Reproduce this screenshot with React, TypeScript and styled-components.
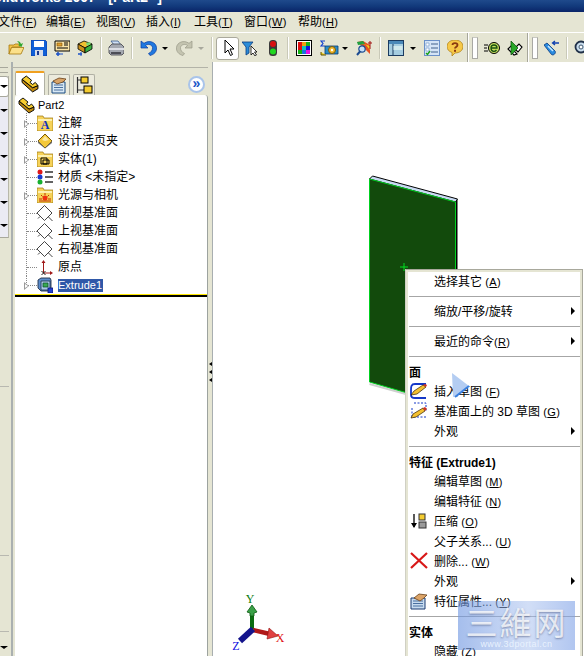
import React from "react";
import styled, { createGlobalStyle } from "styled-components";

const Global = createGlobalStyle`
  html, body { margin: 0; padding: 0; background: #fff; }
  #root { width: 584px; height: 656px; }
`;

const CJK = `"Liberation Sans", "Noto Sans CJK SC", sans-serif`;
const FACE = "#e5e5d3";

const Page = styled.div`
  width: 584px; height: 656px; overflow: hidden; display: flex; flex-direction: column;
  font-family: ${CJK}; font-size: 12px; color: #000; background: ${FACE};
`;
const TitleBar = styled.div`
  height: 12px; flex: none; overflow: hidden; color: #fff; font-weight: bold; font-size: 14px; line-height: 16px;
  background: linear-gradient(#1f4a8c, #123a7c 50%, #0a2468);
  white-space: nowrap;
  span { display: block; margin: -11px 0 0 -16px; font-family: "Liberation Sans", sans-serif; }
`;
const MenuBar = styled.div`
  height: 20px; flex: none; display: flex; align-items: center; background: ${FACE}; white-space: nowrap; overflow: hidden;
`;
const MenuEntry = styled.div<{ $w: number; $first?: boolean }>`
  flex: none; width: ${p => p.$w}px; line-height: 20px; margin-left: ${p => (p.$first ? -2 : 0)}px;
`;
const Key = styled.span`
  font-size: 11px; letter-spacing: .3px;
  font-family: "Liberation Sans", sans-serif;
`;
const Toolbar = styled.div`
  height: 28px; padding-top: 1px; flex: none; display: flex; align-items: center; padding-left: 8px; background: ${FACE};
  border-top: 1px solid #fff; overflow: hidden;
`;
const Tool = styled.div<{ $l: number; $w?: number }>`
  flex: none; margin-left: ${p => p.$l}px; width: ${p => p.$w ?? 16}px; height: 16px; display: flex;
  svg { display: block; width: 100%; height: 100%; }
`;
const Pressed = styled.div<{ $l: number }>`
  flex: none; margin-left: ${p => p.$l}px; width: 23px; height: 23px; box-sizing: border-box; background: #fff;
  border: 1px solid #aaa99c; border-radius: 3px; display: flex; align-items: center; justify-content: center;
`;
const Sep = styled.div<{ $l: number }>`
  flex: none; margin-left: ${p => p.$l}px; width: 2px; height: 22px; background: #fff; border-left: 1px solid #c9c9b8; box-sizing: border-box;
`;
const Divider = styled.div<{ $l: number }>`
  flex: none; margin-left: ${p => p.$l}px; width: 2px; height: 30px; background: #fff; border-left: 1px solid #a6a69a; box-sizing: border-box;
`;
const Grip = styled.div<{ $l: number }>`
  flex: none; margin-left: ${p => p.$l}px; width: 6px; height: 22px; box-sizing: border-box;
  background: #fff; border: 1px solid #a9a9a4; border-top-color: #c8c8c2;
`;
const Drop = styled.div<{ $l: number; $off?: boolean }>`
  flex: none; margin-left: ${p => p.$l}px; width: 0; height: 0;
  border-left: 3px solid transparent; border-right: 3px solid transparent;
  border-top: 3px solid ${p => (p.$off ? "#a8a89c" : "#000")};
`;
const Main = styled.div`
  flex: 1; min-height: 0; display: flex; background: ${FACE};
`;
const Strip = styled.div`
  flex: none; width: 11px; box-sizing: border-box; display: flex; flex-direction: column;
  background: ${FACE};
`;
const StripGrip = styled.div`
  height: 14px; flex: none; box-sizing: border-box; padding-top: 5px;
  &::before { content: ""; display: block; width: 8px; height: 4px; border-top: 1px solid #a8a89c; border-bottom: 1px solid #a8a89c; }
`;
const ComboStack = styled.div`
  flex: none; height: 162px; width: 9px; box-sizing: border-box; background: #ebebf3;
  border-bottom: 1px solid #a8a89c; border-right: 1px solid #b8b8aa; display: flex; flex-direction: column;
`;
const ComboHead = styled.div`
  height: 21px; flex: none; margin-bottom: 2px; margin-right: -1px; box-sizing: border-box; display: flex; align-items: center;
  background: #fff; border: 1px solid #a8a89c; border-left: 0; border-radius: 0 3px 3px 0;
`;
const ComboRow = styled.div<{ $h?: number }>`
  height: ${p => p.$h ?? 23}px; flex: none; display: flex; align-items: center;
`;
const StripSlice = styled.div<{ $h: number }>`
  flex: none; width: 9px; height: ${p => p.$h}px; box-sizing: border-box; border-bottom: 1px solid #b8b8b0;
`;
const StripArrow = styled.div`
  width: 0; height: 0; border-left: 4px solid transparent; border-right: 4px solid transparent; border-top: 3px solid #000;
`;
const Panel = styled.div`
  flex: none; width: 197px; box-sizing: border-box; display: flex; flex-direction: column;
  border-left: 2px solid #aab0b0; padding: 0 1px 0 2px; position: relative; background: ${FACE};
`;
const PanelTop = styled.div`
  flex: none; height: 28px; display: flex; align-items: flex-end; gap: 3px;
  box-sizing: border-box; border-top: 1px solid #b3b3a8; margin: 5px -1px 0 -4px; padding: 0 4px; position: relative;
`;
const Tab = styled.div<{ $active?: boolean }>`
  flex: none; width: ${p => (p.$active ? 30 : 22)}px; height: ${p => (p.$active ? 24 : 21)}px;
  box-sizing: border-box; display: flex; align-items: center; justify-content: center;
  background: ${p => (p.$active ? "#fff" : "#ecebdd")};
  border: 1px solid #b0b0a4; border-bottom: 0; border-radius: 2px 2px 0 0;
  border-top: ${p => (p.$active ? "2px solid #f0a020" : "1px solid #b0b0a4")};
  svg { width: 18px; height: 18px; display: block; }
`;
const Chevron = styled.div`
  position: absolute; right: 3px; top: 8px; width: 17px; height: 17px; box-sizing: border-box; border-radius: 50%;
  background: #fff; border: 2px solid #a9c4ea; color: #1c55c8; font: bold 14px/11px "Liberation Sans", sans-serif; text-align: center;
`;
const Tree = styled.div`
  flex: 1; min-height: 0; background: #fff; border-radius: 3px 3px 0 0; border-right: 1px solid #9da39f; margin-right: -1px; padding-top: 1px;
  display: flex; flex-direction: column;
`;
const Rows = styled.div`
  flex: none; padding-left: 3px; height: 198px; display: flex; flex-direction: column;
`;
const RootRow = styled.div`
  flex: none; height: 18px; display: flex; align-items: center; gap: 3px;
  svg { width: 17px; height: 17px; display: block; }
`;
const Row = styled.div`
  flex: none; height: 18px; display: flex; align-items: center;
  svg.ic { width: 16px; height: 16px; display: block; }
`;
const Gutter = styled.div<{ $last?: boolean }>`
  flex: none; align-self: stretch; width: 19px; position: relative;
  &::before { content: ""; position: absolute; left: 8px; top: -1px; height: ${p => (p.$last ? 10 : 19)}px; border-left: 1px dotted #888; }
  &::after { content: ""; position: absolute; left: 9px; top: 9px; width: 10px; border-top: 1px dotted #888; }
`;
const Expander = styled.div`
  position: absolute; z-index: 1; left: 6px; top: 6px; width: 0; height: 0;
  border-left: 5px solid #9a9a9a; border-top: 4px solid transparent; border-bottom: 4px solid transparent;
  &::after { content: ""; position: absolute; left: -4px; top: -2px; width: 0; height: 0;
    border-left: 3px solid #fff; border-top: 2px solid transparent; border-bottom: 2px solid transparent; }
`;
const Label = styled.div<{ $sel?: boolean }>`
  margin-left: 5px; line-height: 13px; padding: 0 1px 0 0; white-space: nowrap;
  background: ${p => (p.$sel ? "#2f58a8" : "transparent")}; color: ${p => (p.$sel ? "#fff" : "#000")};
`;
const Latin = styled.span`
  font-family: "Liberation Sans", sans-serif; font-size: 11px;
`;
const Rollback = styled.div`
  flex: none; height: 3px; box-sizing: border-box; background: #000; border-top: 1px solid #ffe800;
`;
const Splitter = styled.div`
  flex: none; width: 5px; box-sizing: border-box; background: ${FACE}; border-right: 1px solid #a8aeb0;
  display: flex; flex-direction: column; align-items: center; gap: 4px; padding-top: 300px;
`;
const Grab = styled.div`
  width: 0; height: 0; border-right: 3px solid #000; border-top: 2px solid transparent; border-bottom: 2px solid transparent;
`;
const Viewport = styled.div`
  flex: 1; min-width: 0; position: relative; background: #fff; overflow: hidden;
`;
const Drawing = styled.svg<{ $x: number; $y: number }>`
  position: absolute; left: ${p => p.$x}px; top: ${p => p.$y}px; display: block;
`;
const Menu = styled.div`
  position: absolute; left: 192px; top: 207px; width: 178px; box-sizing: border-box; background: #fff;
  border: 1px solid #a8a89c; border-left-color: #d0d0c4; padding: 1px 0 0 0; box-shadow: inset 2px 0 0 ${FACE}, inset -2px 0 0 ${FACE}, inset 0 2px 0 ${FACE};
  white-space: nowrap;
`;
const MItem = styled.div`
  height: 20px; box-sizing: border-box; padding-top: 1px; display: flex; align-items: center; position: relative; padding-left: 28px; line-height: 20px;
`;
const MText = styled.span`
  white-space: pre;
`;
const MHead = styled.div`
  height: 20px; display: flex; align-items: center; padding-left: 3px; font-weight: bold;
`;
const MSep = styled.div`
  height: 10px; display: flex; align-items: center; padding: 0 2px 0 3px;
  &::before { content: ""; flex: 1; height: 1px; background: #a6a6a6; }
`;
const MIcon = styled.div`
  position: absolute; left: 4px; top: 1px; width: 18px; height: 18px;
  svg { width: 100%; height: 100%; display: block; }
`;
const MArrow = styled.div`
  position: absolute; right: 7px; top: 6px; width: 0; height: 0;
  border-left: 4px solid #000; border-top: 4px solid transparent; border-bottom: 4px solid transparent;
`;
const Watermark = styled.div`
  position: absolute; left: 245px; top: 539px; width: 117px; height: 49px; overflow: hidden;
  background: linear-gradient(90deg, rgba(110,150,225,.62), rgba(165,190,238,.5) 60%, rgba(125,160,230,.6));
  text-align: center; color: rgba(255,255,255,.8);
`;
const WaterBig = styled.div`
  font-size: 32px; line-height: 36px; letter-spacing: 2px; font-family: "Noto Sans CJK TC", sans-serif;
  text-shadow: 0 1px 2px rgba(70,80,120,.55); margin-top: 2px;
`;
const WaterSmall = styled.div`
  font-size: 9px; line-height: 10px; color: rgba(235,244,255,.95); font-family: "Liberation Sans", sans-serif; letter-spacing: .4px;
`;

/* ---------- icons ---------- */
const FolderIcon = () => (
  <svg viewBox="0 0 16 16">
    <path d="M1 5h5l1-1h5v3H4L1 14z" fill="#f4c34a" stroke="#a67a10" strokeWidth=".8" />
    <path d="M3.500 7.500H16l-3 6.500H1z" fill="#fbe08a" stroke="#a67a10" strokeWidth=".8" />
    <path d="M9 1c2 0 3.500 1 4 3l2-1-1.500 4-3.500-2 1.500-.5C11 3 10 2 9 1z" fill="#2ea82e" />
  </svg>
);
const SaveIcon = () => (
  <svg viewBox="0 0 16 16">
    <path d="M0 0h14l2 2v14H0z" fill="#1060d8" stroke="#0a2a8c" strokeWidth=".6" />
    <path d="M3 1h10v6H3z" fill="#fff" />
    <path d="M4 10h8v6H4z" fill="#d6dce8" />
    <path d="M6 11h2v4H6z" fill="#1a3a90" />
  </svg>
);
const ScreenIcon = () => (
  <svg viewBox="0 0 16 16">
    <path d="M1 1h15v10H1z" fill="#fbe6a8" stroke="#000" />
    <path d="M3 3h5v3H3z" fill="#e0a030" stroke="#7a4a00" strokeWidth=".6" />
    <path d="M10 3h4M10 5h4M3 8h11" stroke="#000" />
    <path d="M4 16v-4M2 14h4" stroke="#1850c8" strokeWidth="1.500" />
    <path d="M6 14h3" stroke="#1850c8" />
  </svg>
);
const PartSwapIcon = () => (
  <svg viewBox="0 0 16 16">
    <path d="M1 4l6-3 8 3-7 4z" fill="#f0c030" stroke="#000" strokeWidth=".8" />
    <path d="M1 4v5l7 4V8z" fill="#c8901c" stroke="#000" strokeWidth=".8" />
    <path d="M8 8v5l7-4V4z" fill="#38b040" stroke="#000" strokeWidth=".8" />
    <path d="M9 3l4-1 1 2-4 2z" fill="#7ad870" />
    <path d="M1 14h4" stroke="#1850c8" strokeWidth="1.500" />
    <path d="M4 16v-4" stroke="#1850c8" />
  </svg>
);
const PrintIcon = () => (
  <svg viewBox="0 0 16 16">
    <path d="M3 1h7l3 4H6z" fill="#cfe0f5" stroke="#3a5a8c" strokeWidth=".8" />
    <path d="M1 7l3-3h9l3 3v6l-2 2H3l-2-2z" fill="#a4a8b0" stroke="#404048" strokeWidth=".8" />
    <path d="M1 8h15v2H1z" fill="#dcdee4" />
    <path d="M3 13h10" stroke="#303038" strokeWidth="1.500" />
  </svg>
);
const UndoIcon = () => (
  <svg viewBox="0 0 17 16">
    <path d="M1 1v7h7L5.500 5.500C8 3.500 12 4.500 12.500 7.500c.3 2.500-1.500 5-4 6l1.500 2c4-.8 7-4 6.500-8C16 2.500 9.500-.5 4 3.300z" fill="#1f78e0" stroke="#0a3ca0" strokeWidth=".7" />
  </svg>
);
const RedoIcon = () => (
  <svg viewBox="0 0 17 16">
    <path d="M16 1v7H9l2.500-2.500C9 3.500 5 4.500 4.500 7.500c-.3 2.500 1.500 5 4 6L7 15.500c-4-.8-7-4-6.500-8C1 2.500 7.500-.5 13 3.300z" fill="#c4c4b0" stroke="#9a9a88" strokeWidth=".7" />
  </svg>
);
const ArrowCursorIcon = () => (
  <svg width="16" height="18" viewBox="0 0 16 18">
    <path d="M5 1v13l3-3 2.500 5.500 2-1L10 10h4z" fill="#fff" stroke="#000" strokeWidth="1" />
  </svg>
);
const FilterIcon = () => (
  <svg viewBox="0 0 16 16">
    <path d="M0 2h11L7 7v6L4 15V7z" fill="#2a8cd8" stroke="#083a80" strokeWidth=".8" />
    <path d="M9 6v9l2-2 2 3 1.500-1-2-3H15z" fill="#fff" stroke="#000" strokeWidth=".8" />
  </svg>
);
const TrafficIcon = () => (
  <svg viewBox="0 0 16 16">
    <rect x="4" y="0" width="8" height="16" rx="3.500" fill="#3a3a3a" />
    <circle cx="8" cy="4" r="3" fill="#d81010" />
    <circle cx="8" cy="11.500" r="3" fill="#20d820" />
  </svg>
);
const PaletteIcon = () => {
  const cols = ["#e01010", "#f0a010", "#18b018", "#e01010", "#10c0c0", "#1010e0", "#10b010", "#1870e0", "#e010e0"];
  return (
    <svg viewBox="0 0 16 16" shapeRendering="crispEdges">
      <rect x=".5" y=".5" width="15" height="15" fill="#fff" stroke="#000" />
      {cols.map((c, i) => (
        <rect key={i} x={2 + (i % 3) * 4} y={2 + Math.floor(i / 3) * 4} width="4" height="4" fill={c} />
      ))}
    </svg>
  );
};
const MeasureIcon = () => (
  <svg viewBox="0 0 19 16">
    <path d="M5 1H1l2 2.500L1 6h4" fill="none" stroke="#1040d0" strokeWidth="1.200" />
    <path d="M5 6h13v8H5z" fill="#2a8cc8" stroke="#083a70" strokeWidth=".8" />
    <circle cx="12" cy="10" r="3.500" fill="#f0b830" stroke="#7a5a08" />
    <circle cx="12" cy="10" r="1.200" fill="#fff" />
    <path d="M1 12v3h5" fill="#f0d020" stroke="#605000" />
  </svg>
);
const AnalysisIcon = () => (
  <svg viewBox="0 0 16 16">
    <path d="M1 2l6-1 7 4v9L8 8z" fill="#e85020" />
    <path d="M1 2l6-1 2 3-7 1z" fill="#20a040" />
    <path d="M5 3l5 2 4 5v-4z" fill="#f0d020" />
    <path d="M14 1v8M12 3h4" stroke="#a01010" />
    <circle cx="6" cy="9" r="3.200" fill="#c8e0f8" stroke="#1a4a90" strokeWidth="1.200" />
    <path d="M4 11.500L1 15" stroke="#1a4a90" strokeWidth="2" />
  </svg>
);
const PanelIcon = () => (
  <svg viewBox="0 0 16 16">
    <rect x=".5" y=".5" width="15" height="15" fill="#a4cce0" stroke="#1a3a60" />
    <rect x="1" y="1" width="14" height="3" fill="#4a88b8" />
    <path d="M5 4v11" stroke="#1a3a60" />
    <rect x="5.500" y="6" width="9" height="4" fill="#d0e8ec" />
  </svg>
);
const CheckListIcon = () => (
  <svg viewBox="0 0 16 16">
    <rect x=".5" y=".5" width="15" height="15" fill="#d4e4f6" stroke="#6a90c8" />
    <path d="M2 3h3v3H2zM2 8h3v3H2z" fill="#fff" stroke="#6a90c8" strokeWidth=".6" />
    <path d="M7 4h7M7 8h7M7 12h7" stroke="#40608c" />
    <path d="M2 13l1.500 1.500L6 11" fill="none" stroke="#18a018" strokeWidth="1.400" />
  </svg>
);
const HelpIcon = () => (
  <svg viewBox="0 0 16 16">
    <path d="M8 0c4.500 0 8 2.500 8 6.500S12.500 13 8 13l-3 3v-3.500C2 11.500 0 9.500 0 6.500 0 2.500 3.500 0 8 0z" fill="#f6c848" stroke="#a87810" strokeWidth=".7" />
    <path d="M5.500 5C5.500 2.500 10.500 2.500 10.500 5c0 2-2.500 2-2.500 3.500" fill="none" stroke="#8a3a10" strokeWidth="1.800" />
    <rect x="7" y="9.800" width="2" height="2" fill="#8a3a10" />
  </svg>
);
const EIcon = () => (
  <svg viewBox="0 0 16 16">
    <path d="M0 5h4M0 8h3M0 11h4" stroke="#000" />
    <circle cx="10" cy="8" r="5.500" fill="#c8e060" stroke="#000" />
    <path d="M7 8h6c0-4-6-4-6 0s4 4 5.500 2" fill="none" stroke="#185010" strokeWidth="1.300" />
  </svg>
);
const LinkIcon = () => (
  <svg viewBox="0 0 16 16">
    <path d="M1 9l4-4 4 4-2 2 3 3-3 1-5-5z" fill="#fff" stroke="#000" strokeWidth="1.100" />
    <path d="M9 7l3-3 3 3-4 5-2-2z" fill="#fff" stroke="#000" strokeWidth="1.100" />
    <path d="M4 1v14l7-7z" fill="#28a828" stroke="#0a4a0a" strokeWidth=".7" />
  </svg>
);
const TorchIcon = () => (
  <svg viewBox="0 0 16 16">
    <path d="M0 5l3-2 8 8c1.500 2-1.500 5-3.500 3.500z" fill="#2a8ce0" stroke="#083a80" strokeWidth=".8" />
    <path d="M4 6l5 5" stroke="#c8e8ff" strokeWidth="1.500" />
    <path d="M15 3H9M11 1L8.500 3 11 5" fill="none" stroke="#1040b0" strokeWidth="1.300" />
  </svg>
);
const ZoomRingIcon = () => (
  <svg viewBox="0 0 16 16">
    <circle cx="7" cy="7" r="5.500" fill="#c8dcec" stroke="#203048" strokeWidth="1.800" />
    <circle cx="7" cy="7" r="2" fill="#fff" stroke="#405870" />
    <path d="M11 11l4 4" stroke="#203048" strokeWidth="2" />
  </svg>
);
const BlockIcon = () => (
  <svg viewBox="0 0 17 17">
    <path d="M1 4v3l10 9 5-3v-3l-5 2z" fill="#c08a10" stroke="#000" strokeWidth=".9" strokeLinejoin="round" />
    <path d="M1 4l4-3 5 4-1.500 2L11 9l2.500-2L16 10l-5 2z" fill="#f6cc30" stroke="#000" strokeWidth=".9" strokeLinejoin="round" />
  </svg>
);
const NoteTabIcon = () => (
  <svg viewBox="0 0 18 18">
    <path d="M2 6h13v11H2z" fill="#d8e8f4" stroke="#1a4a80" />
    <path d="M4 9h9M4 11.500h9M4 14h9" stroke="#4a70a0" />
    <path d="M3 5l6-3 7 1-3 3-6 2z" fill="#d8a468" stroke="#6a4018" strokeWidth=".8" />
  </svg>
);
const ConfigTabIcon = () => (
  <svg viewBox="0 0 18 18">
    <path d="M2.500 1v16M2.500 4H7M2.500 14H9" stroke="#303030" strokeWidth="1.200" />
    <rect x="6" y="1" width="7" height="6" fill="#f4cc30" stroke="#000" />
    <rect x="9" y="10" width="8" height="7" fill="#f4cc30" stroke="#000" />
  </svg>
);
const FolderBase = ({ children }: { children: React.ReactNode }) => (
  <svg className="ic" viewBox="0 0 16 16">
    <path d="M0 3V1h6l1 2h9v13H0z" fill="#f6d258" stroke="#9a7410" strokeWidth=".7" />
    <path d="M1 4h14v2H1z" fill="#fdf0b0" />
    {children}
  </svg>
);
const AnnotIcon = () => (
  <FolderBase>
    <text x="8" y="14" textAnchor="middle" fontFamily="Liberation Serif" fontWeight="bold" fontSize="12" fill="#1030c0">A</text>
  </FolderBase>
);
const BodiesIcon = () => (
  <FolderBase>
    <path d="M4 7h6v6H4z" fill="#f6d258" stroke="#000" />
    <path d="M6 9h6v4H6z" fill="none" stroke="#000" />
  </FolderBase>
);
const LightsIcon = () => (
  <FolderBase>
    <circle cx="8" cy="11" r="2.500" fill="#f03010" />
    <path d="M8 6v2M4 8l1.500 1.500M12 8l-1.500 1.500M2 12h3M11 12h3M2 14h12" stroke="#c03000" />
  </FolderBase>
);
const DiamondBook = () => (
  <svg className="ic" viewBox="0 0 16 16">
    <path d="M8 1l7 7-7 7-7-7z" fill="#f4c838" stroke="#7a5a08" />
    <path d="M1 8l7 7 7-7v2l-7 5.500L1 10z" fill="#707070" />
    <path d="M8 3l4 4-4 1-3-1z" fill="#fbe8a0" />
  </svg>
);
const MaterialIcon = () => (
  <svg className="ic" viewBox="0 0 16 16">
    <circle cx="3" cy="3" r="2.500" fill="#e01818" />
    <circle cx="3" cy="8" r="2.500" fill="#1838d0" />
    <circle cx="3" cy="13" r="2.500" fill="#18b030" />
    <path d="M8 3h8M8 8h8M8 13h8" stroke="#303030" strokeWidth="1.600" />
  </svg>
);
const PlaneIcon = () => (
  <svg className="ic" viewBox="0 0 16 16">
    <path d="M7.500 .5L15 8l-7.500 7.500L0 8z M11.500 12l4 4M3 11.500l-2 2" fill="#fff" stroke="#303030" strokeWidth=".9" />
  </svg>
);
const OriginIcon = () => (
  <svg className="ic" viewBox="0 0 16 16">
    <path d="M6.500 14V3M6.500 14H14" stroke="#a01818" />
    <path d="M6.500 1L4.500 4h4zM16 14l-3-2v4z" fill="#a01818" />
    <path d="M4.500 12l4 4M8.500 12l-4 4" stroke="#202020" />
  </svg>
);
const ExtrudeIcon = () => (
  <svg className="ic" viewBox="0 0 16 16">
    <path d="M1 3l3-2h9l1 2v11H4l-3-3z" fill="#5a8ccc" stroke="#20304a" strokeWidth=".9" />
    <path d="M4 4h9v9H4z" fill="#a8c8e8" stroke="#20304a" strokeWidth=".8" />
    <path d="M6 6h5v4H6z" fill="#38a850" stroke="#0a4a2a" strokeWidth=".7" />
    <rect x="11" y="11" width="5" height="5" fill="#2040d0" stroke="#0a1470" strokeWidth=".8" />
  </svg>
);
const SketchIcon = () => (
  <svg viewBox="0 0 18 18">
    <path d="M16 2H5C1 2 1 5 1 8v5c0 2 2 3 4 3h11" fill="none" stroke="#1438c8" strokeWidth="1.800" />
    <path d="M1 13l3-4 9-6 3 2-9 7z" fill="#f4c030" stroke="#302000" strokeWidth=".7" />
    <path d="M13 3l3 2 1-2-2-1z" fill="#d03020" />
  </svg>
);
const PlaneSketchIcon = () => (
  <svg viewBox="0 0 18 18">
    <path d="M4 1h12v9M16 15H2V6" fill="none" stroke="#1438c8" strokeDasharray="2 1.500" />
    <path d="M1 16l2-4 10-6 2 3-9 6z" fill="#f4c030" stroke="#302000" strokeWidth=".7" />
    <path d="M13 6l2 3 2-2-2-2z" fill="#d03020" />
  </svg>
);
const SuppressIcon = () => (
  <svg viewBox="0 0 18 18">
    <path d="M4 2v13" stroke="#000" strokeWidth="1.300" />
    <path d="M1 11l3 5 3-5z" fill="#000" />
    <rect x="9" y="2" width="6" height="6" fill="#f4cc30" stroke="#333" />
    <rect x="9" y="10" width="7" height="6" fill="#9a9a9a" stroke="#333" />
  </svg>
);
const CrossIcon = () => (
  <svg viewBox="0 0 18 18">
    <path d="M1 1l16 15M17 1L1 16" stroke="#d81818" strokeWidth="2.200" />
  </svg>
);
const PropsIcon = () => (
  <svg viewBox="0 0 18 18">
    <path d="M1 6h14v11H1z" fill="#c8dcf0" stroke="#1a3a70" />
    <path d="M3 9h10M3 11.500h10M3 14h10" stroke="#4a70a0" />
    <path d="M4 6l5-4 8 1-3 3-4 3z" fill="#dca468" stroke="#6a4018" strokeWidth=".8" />
  </svg>
);

/* ---------- content ---------- */
const menus: [string, string, number][] = [
  ["文件", "F", 48], ["编辑", "E", 50], ["视图", "V", 50], ["插入", "I", 48], ["工具", "T", 50], ["窗口", "W", 54], ["帮助", "H", 60],
];

type Entry =
  | { t: "item"; text: string; k: string; icon?: React.ReactNode; sub?: boolean }
  | { t: "sep" }
  | { t: "head"; text: React.ReactNode };

const entries: Entry[] = [
  { t: "item", text: "选择其它 ", k: "A" },
  { t: "sep" },
  { t: "item", text: "缩放/平移/旋转", k: "", sub: true },
  { t: "sep" },
  { t: "item", text: "最近的命令", k: "R", sub: true },
  { t: "sep" },
  { t: "head", text: "面" },
  { t: "item", text: "插入草图 ", k: "F", icon: <SketchIcon /> },
  { t: "item", text: "基准面上的 3D 草图 ", k: "G", icon: <PlaneSketchIcon /> },
  { t: "item", text: "外观", k: "", sub: true },
  { t: "sep" },
  { t: "head", text: "特征 (Extrude1)" },
  { t: "item", text: "编辑草图 ", k: "M" },
  { t: "item", text: "编辑特征 ", k: "N" },
  { t: "item", text: "压缩 ", k: "O", icon: <SuppressIcon /> },
  { t: "item", text: "父子关系... ", k: "U" },
  { t: "item", text: "删除... ", k: "W", icon: <CrossIcon /> },
  { t: "item", text: "外观", k: "", sub: true },
  { t: "item", text: "特征属性... ", k: "Y", icon: <PropsIcon /> },
  { t: "sep" },
  { t: "head", text: "实体" },
  { t: "item", text: "隐藏 ", k: "Z" },
];

const treeRows: { icon: React.ReactNode; label: React.ReactNode; exp?: boolean }[] = [
  { icon: <AnnotIcon />, label: "注解", exp: true },
  { icon: <DiamondBook />, label: "设计活页夹", exp: true },
  { icon: <BodiesIcon />, label: "实体(1)", exp: true },
  { icon: <MaterialIcon />, label: "材质 <未指定>" },
  { icon: <LightsIcon />, label: "光源与相机", exp: true },
  { icon: <PlaneIcon />, label: "前视基准面" },
  { icon: <PlaneIcon />, label: "上视基准面" },
  { icon: <PlaneIcon />, label: "右视基准面" },
  { icon: <OriginIcon />, label: "原点" },
];

export default function App() {
  return (
    <Page>
      <Global />
      <TitleBar><span>SolidWorks 2007 - [Part2 *]</span></TitleBar>
      <MenuBar>
        {menus.map(([n, k, w], i) => (
          <MenuEntry key={n} $w={w} $first={i === 0}>{n}<Key>(<u>{k}</u>)</Key></MenuEntry>
        ))}
      </MenuBar>
      <Toolbar>
        <Tool $l={0}><FolderIcon /></Tool>
        <Tool $l={7}><SaveIcon /></Tool>
        <Tool $l={7}><ScreenIcon /></Tool>
        <Tool $l={7}><PartSwapIcon /></Tool>
        <Sep $l={7} />
        <Tool $l={6}><PrintIcon /></Tool>
        <Sep $l={7} />
        <Tool $l={7} $w={17}><UndoIcon /></Tool>
        <Drop $l={5} />
        <Tool $l={8} $w={17}><RedoIcon /></Tool>
        <Drop $l={5} $off />
        <Sep $l={7} />
        <Pressed $l={3}><ArrowCursorIcon /></Pressed>
        <Tool $l={3}><FilterIcon /></Tool>
        <Tool $l={7}><TrafficIcon /></Tool>
        <Sep $l={6} />
        <Tool $l={7}><PaletteIcon /></Tool>
        <Tool $l={8} $w={19}><MeasureIcon /></Tool>
        <Drop $l={3} />
        <Tool $l={8}><AnalysisIcon /></Tool>
        <Sep $l={7} />
        <Tool $l={7}><PanelIcon /></Tool>
        <Drop $l={6} />
        <Tool $l={8}><CheckListIcon /></Tool>
        <Tool $l={7}><HelpIcon /></Tool>
        <Divider $l={4} />
        <Grip $l={3} />
        <Tool $l={6}><EIcon /></Tool>
        <Tool $l={7}><LinkIcon /></Tool>
        <Divider $l={4} />
        <Grip $l={3} />
        <Tool $l={6}><TorchIcon /></Tool>
        <Sep $l={6} />
        <Tool $l={6}><ZoomRingIcon /></Tool>
      </Toolbar>
      <Main>
        <Strip>
          <StripGrip />
          <ComboStack>
            <ComboHead><StripArrow /></ComboHead>
            {[0, 1, 2, 3, 4, 5].map(i => <ComboRow key={i}><StripArrow /></ComboRow>)}
          </ComboStack>
          <StripSlice $h={149} />
          <StripSlice $h={169} />
          <StripSlice $h={76} />
          <ComboRow $h={31}><StripArrow /></ComboRow>
        </Strip>
        <Panel>
          <PanelTop>
            <Tab $active><BlockIcon /></Tab>
            <Tab><NoteTabIcon /></Tab>
            <Tab><ConfigTabIcon /></Tab>
            <Chevron>»</Chevron>
          </PanelTop>
          <Tree>
            <Rows>
              <RootRow><BlockIcon /><Latin>Part2</Latin></RootRow>
              {treeRows.map((r, i) => (
                <Row key={i}>
                  <Gutter>{r.exp && <Expander />}</Gutter>
                  {r.icon}
                  <Label>{r.label}</Label>
                </Row>
              ))}
              <Row>
                <Gutter $last><Expander /></Gutter>
                <ExtrudeIcon />
                <Label $sel><Latin>Extrude1</Latin></Label>
              </Row>
            </Rows>
            <Rollback />
          </Tree>
        </Panel>
        <Splitter><Grab /><Grab /><Grab /></Splitter>
        <Viewport>
          <Drawing $x={150} $y={109} width="100" height="245" viewBox="0 0 100 245">
            <path d="M6.500 213l40 11" stroke="#cfcfcf" strokeWidth="2" />
            <path d="M6.500 8l3-3 85 23-2 3z" fill="#c8daf2" stroke="#000" strokeWidth="1" />
            <path d="M92.500 31L94.500 28v205l-2 3z" fill="#000" />
            <path d="M6.500 8l86 23v205L6.500 211z" fill="#124a0c" stroke="#00d020" strokeWidth="1" />
            <path d="M37 96h8M41 92v8" stroke="#00e020" strokeWidth="1" />
          </Drawing>
          <Drawing $x={15} $y={531} width="60" height="63" viewBox="0 0 60 63">
            <path d="M24 36V18" stroke="#0b6b10" strokeWidth="4" />
            <path d="M24 12l-5 7 3 1v3h4v-3l3-1z" fill="#3aa048" stroke="#0b5b10" strokeWidth=".8" />
            <path d="M25 37l17 4" stroke="#b01818" strokeWidth="4.500" />
            <path d="M41 35l9 8-11 3z" fill="#e04040" stroke="#901010" strokeWidth=".6" />
            <path d="M25 36L12 48" stroke="#14148c" strokeWidth="6" />
            <text x="22" y="10" fontFamily="Liberation Serif" fontSize="12" fill="#0b7b10" textAnchor="middle">Y</text>
            <text x="52" y="49" fontFamily="Liberation Serif" fontSize="12" fill="#e01010" textAnchor="middle">X</text>
            <text x="8" y="57" fontFamily="Liberation Serif" fontSize="12" fill="#1010e0" textAnchor="middle">Z</text>
          </Drawing>
          <Menu>
            {entries.map((e, i) => {
              if (e.t === "sep") return <MSep key={i} />;
              if (e.t === "head") return <MHead key={i}>{e.text}</MHead>;
              return (
                <MItem key={i}>
                  {e.icon && <MIcon>{e.icon}</MIcon>}
                  <MText>{e.text}{e.k && <Key>(<u>{e.k}</u>)</Key>}</MText>
                  {e.sub && <MArrow />}
                </MItem>
              );
            })}
          </Menu>
          <Drawing $x={239} $y={311} width="18" height="26" viewBox="0 0 18 26">
            <path d="M0 0l17 13-12 10-4 1z" fill="#b4cdf2" />
            <path d="M17 13L3 24" stroke="#3a80e0" strokeWidth="2" />
          </Drawing>
          <Watermark>
            <WaterBig>三維网</WaterBig>
            <WaterSmall>www.3dportal.cn</WaterSmall>
          </Watermark>
        </Viewport>
      </Main>
    </Page>
  );
}
